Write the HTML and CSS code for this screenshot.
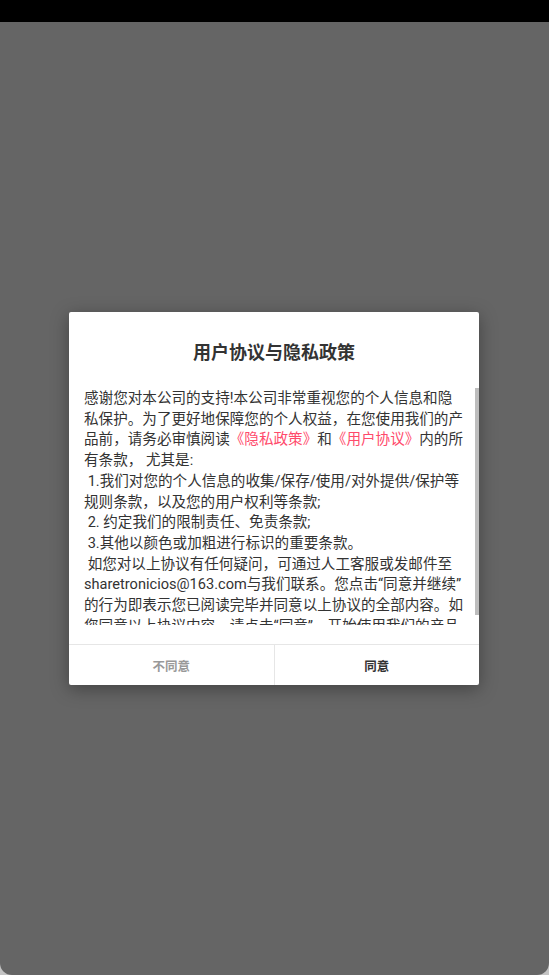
FILE: index.html
```html
<!DOCTYPE html>
<html lang="zh-CN">
<head>
<meta charset="utf-8">
<title>用户协议与隐私政策</title>
<link rel="stylesheet" href="styles.css">
</head>
<body>
<div class="screen">
  <div class="statusbar"></div>
  <div class="backdrop">
    <div class="dialog">
      <div class="dialog-title">用户协议与隐私政策</div>
      <div class="dialog-body">
        <div class="dialog-text">感谢您对本公司的支持!本公司非常重视您的个人信息和隐私保护。为了更好地保障您的个人权益，在您使用我们的产品前，请务必审慎阅读<span class="link">《隐私政策》</span>和<span class="link">《用户协议》</span>内的所有条款， 尤其是:<br> 1.我们对您的个人信息的收集/保存/使用/对外提供/保护等规则条款，以及您的用户权利等条款;<br> 2. 约定我们的限制责任、免责条款;<br> 3.其他以颜色或加粗进行标识的重要条款。<br> 如您对以上协议有任何疑问，可通过人工客服或发邮件至sharetronicios@163.com与我们联系。您点击“同意并继续”的行为即表示您已阅读完毕并同意以上协议的全部内容。如您同意以上协议内容，请点击“同意”，开始使用我们的产品和服务！</div>
        <div class="scroll-thumb"></div>
      </div>
      <div class="dialog-actions">
        <div class="btn btn-cancel">不同意</div>
        <div class="btn btn-ok">同意</div>
      </div>
    </div>
  </div>
</div>
</body>
</html>
```
FILE: styles.css
```css
html, body {
  margin: 0;
  padding: 0;
}
body {
  background: #c4c4c4;
  font-family: Roboto, "Noto Sans CJK SC", sans-serif;
  color: #333333;
}
.screen {
  width: 549px;
  height: 975px;
  display: flex;
  flex-direction: column;
}
.statusbar {
  height: 22px;
  background: #000000;
  flex: none;
}
.backdrop {
  flex: 1;
  background: #656565;
  border-radius: 0 0 12px 12px;
  display: flex;
  align-items: center;
  justify-content: center;
  padding-right: 1px;
}
.dialog {
  width: 410px;
  background: #ffffff;
  border-radius: 2px;
  box-shadow: 0 4px 18px rgba(0, 0, 0, 0.35);
  display: flex;
  flex-direction: column;
}
.dialog-title {
  padding: 29px 0 23px;
  line-height: 24px;
  font-size: 18px;
  font-weight: bold;
  text-align: center;
  color: #333333;
}
.dialog-body {
  position: relative;
  height: 237px;
  overflow: hidden;
  padding: 0 0 0 15px;
  margin-bottom: 19px;
}
.dialog-text {
  width: 380px;
  font-size: 14.58px;
  line-height: 20.7px;
  color: #333333;
  white-space: pre-wrap;
}
.scroll-thumb {
  position: absolute;
  top: 0;
  right: 0;
  width: 4px;
  height: 227px;
  background: #bdbdbd;
}
.link {
  color: #ff4a6b;
}
.dialog-actions {
  display: flex;
  height: 40px;
  border-top: 1px solid #e6e6e6;
}
.btn {
  flex: 1;
  display: flex;
  align-items: center;
  justify-content: center;
  font-size: 12.5px;
  font-weight: bold;
}
.btn-cancel {
  color: #999999;
  border-right: 1px solid #e6e6e6;
}
.btn-ok {
  color: #333333;
}
```
